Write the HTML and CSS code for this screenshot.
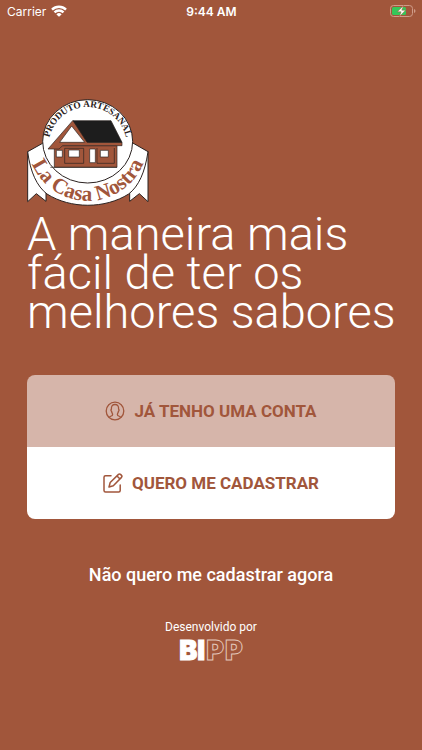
FILE: index.html
```html
<!DOCTYPE html>
<html lang="pt-BR">

<head>
    <meta charset="UTF-8">
    <meta name="viewport" content="width=device-width, initial-scale=1.0">
    <title>La Casa Nostra</title>
    <link rel="stylesheet" href="styles.css">
</head>

<body>
    <header class="status-bar">
        <div class="carrier">
            <span>Carrier</span>
            <svg width="16" height="12" viewBox="0 0 16 12" fill="none" stroke="#fff" stroke-width="2.4">
                <path d="M1 4.6a10 10 0 0 1 14 0" />
                <path d="M3.5 7.4a6.4 6.4 0 0 1 9 0" />
                <path d="M8 11.8L5.4 9.4a3.7 3.7 0 0 1 5.2 0z" fill="#fff" stroke="none" />
            </svg>
        </div>
        <span class="time">9:44 AM</span>
        <div class="battery">
            <svg width="26" height="12" viewBox="0 0 26 12">
                <rect x="0.5" y="0.5" width="22" height="11" rx="3" fill="none" stroke="#cf9c89" />
                <rect x="2" y="2" width="14" height="8" rx="1.5" fill="#35c759" />
                <path d="M24 4v4q1.5-.6 1.5-2T24 4z" fill="#cf9c89" />
                <path d="M13.5 0.5L7.5 6.8h3.6L9.5 11.5l6-6.3h-3.7z" fill="#fff" stroke="#a1563b" stroke-width="0.5" />
            </svg>
        </div>
    </header>

    <main class="welcome">
        <svg class="logo" viewBox="20 13 366 321" role="img" aria-label="La Casa Nostra">
            <defs>
                <path id="top-arc" d="M84 155A118 118 0 0 1 320 155" />
                <path id="ribbon-arc" d="M22 170C70 368 336 368 382 168" />
            </defs>
            <!-- ribbon tails -->
            <g fill="#fff" stroke="#2b2220" stroke-width="3">
                <path d="M22 171V321L48 297L77 320V270z" />
                <path d="M383 171V321L357 297L328 320V270z" />
                <path d="M22 171L72 143H334L383 171C374 233 355 275 325 298C254 343 151 343 80 298C50 275 30 233 22 171z" />
                <ellipse cx="202" cy="140" rx="135" ry="125" />
            </g>
            <!-- house -->
            <g stroke="#2b2220" stroke-width="2">
                <path d="M102 153H290V218H102z" fill="#a1563b" />
                <path d="M83 163L157 78L170 86L205 143H305V153H127L116 163z" fill="#a1563b" />
                <path d="M154 94L193 143H118z" fill="#fff" />
                <path d="M158 78H272L305 143H200z" fill="#1d1d1d" />
                <path d="M108 167H126V187H108zM145 166H177V187H145zM240 167H264V187H240zM208 163H225V204H208z" fill="#fff" />
                <path d="M133 161H190V206H133zM230 160V206H282V160M90 218H290" fill="none" />
            </g>
            <text class="logo-top"><textPath href="#top-arc" startOffset="50%">PRODUTO ARTESANAL</textPath></text>
            <text class="logo-name"><textPath href="#ribbon-arc" startOffset="50%">La Casa Nostra</textPath></text>
        </svg>

        <h1>A maneira mais<br> fácil de ter os<br> melhores sabores</h1>

        <div class="actions">
            <button class="btn btn-login">
                <svg width="20" height="20" viewBox="0 0 20 20" fill="none" stroke="currentColor" stroke-width="1.3">
                    <circle cx="10" cy="10" r="8.8" />
                    <path d="M4 16.3c.6-1.2 3.6-1 3.6-2.6 0-1.200-.8-1.900-1-3.400-.8-.5-.8-1.800-.2-2.200C6.200 5 7.500 3.500 10 3.500s3.800 1.500 3.600 4.600c.6.4.6 1.700-.2 2.200-.2 1.500-1 2.200-1 3.400 0 1.600 3 1.400 3.600 2.600" />
                </svg>
                <span>JÁ TENHO UMA CONTA</span>
            </button>
            <button class="btn btn-signup">
                <svg width="20" height="20" viewBox="0 0 20 20" fill="none" stroke="currentColor" stroke-width="1.5" stroke-linejoin="round" stroke-linecap="round">
                    <path d="M8 2.800H2.500Q1 2.800 1 4.300V17.500Q1 19 2.500 19H15.700Q17.200 19 17.200 17.500V12" />
                    <path d="M6 14L7.200 9.500L15.500 1.400Q16.500.5 17.500 1.400L18.500 2.400Q19.400 3.300 18.500 4.400L10.300 12.700zM14 3L17 6" />
                </svg>
                <span>QUERO ME CADASTRAR</span>
            </button>
        </div>

        <a href="#" class="skip">Não quero me cadastrar agora</a>

        <footer class="credits">
            <span>Desenvolvido por</span>
            <div class="bipp"><b>BI</b><span>P</span><span>P</span></div>
        </footer>
    </main>
</body>

</html>
```
FILE: styles.css
```css
* {
    margin: 0;
    padding: 0;
    box-sizing: border-box;
}

body {
    background-color: #a1563b;
    color: #fff;
    font-family: Roboto, sans-serif;
    min-height: 100vh;
}

.status-bar {
    display: grid;
    grid-template-columns: 1fr auto 1fr;
    align-items: center;
    height: 22px;
    padding: 0 6px 0 7px;
    font-family: Inter, sans-serif;
    font-size: 12px;
}

.carrier {
    display: flex;
    align-items: center;
    gap: 5px;
}

.time {
    font-weight: 600;
}

.battery {
    display: flex;
    justify-content: flex-end;
}

.welcome {
    display: flex;
    flex-direction: column;
    padding: 77px 27px 24px;
}

.logo {
    width: 122px;
    height: 107px;
}

.logo text {
    font-family: "Liberation Serif", serif;
    font-weight: bold;
    text-anchor: middle;
}

.logo-top {
    font-size: 28px;
    fill: #2b2220;
}

.logo-name {
    font-size: 64px;
    fill: #a1563b;
}

h1 {
    margin-top: 8px;
    font-size: 47px;
    font-weight: 300;
    line-height: 39px;
    white-space: nowrap;
}

.actions {
    margin-top: 44px;
    border-radius: 8px;
    overflow: hidden;
}

.btn {
    display: flex;
    justify-content: center;
    align-items: center;
    gap: 9px;
    width: 100%;
    height: 72px;
    border: none;
    color: #a1563b;
    font-family: Roboto, sans-serif;
    font-size: 17px;
    font-weight: 700;
    cursor: pointer;
}

.btn-login {
    background-color: #d6b5aa;
}

.btn-signup {
    background-color: #fff;
}

.skip {
    margin-top: 45px;
    color: #fff;
    font-size: 18px;
    font-weight: 500;
    line-height: 22px;
    text-align: center;
    text-decoration: none;
}

.credits {
    display: flex;
    flex-direction: column;
    align-items: center;
    margin-top: 33px;
    font-size: 12px;
    line-height: 16px;
}

.bipp {
    display: flex;
    gap: 1px;
    font-family: Inter, sans-serif;
    font-size: 27px;
    line-height: 32px;
    font-weight: 900;
}

.bipp b {
    -webkit-text-stroke: 1px #fff;
}

.bipp span {
    color: #a1563b;
    -webkit-text-stroke: 1px #e3c6ba;
}
```
